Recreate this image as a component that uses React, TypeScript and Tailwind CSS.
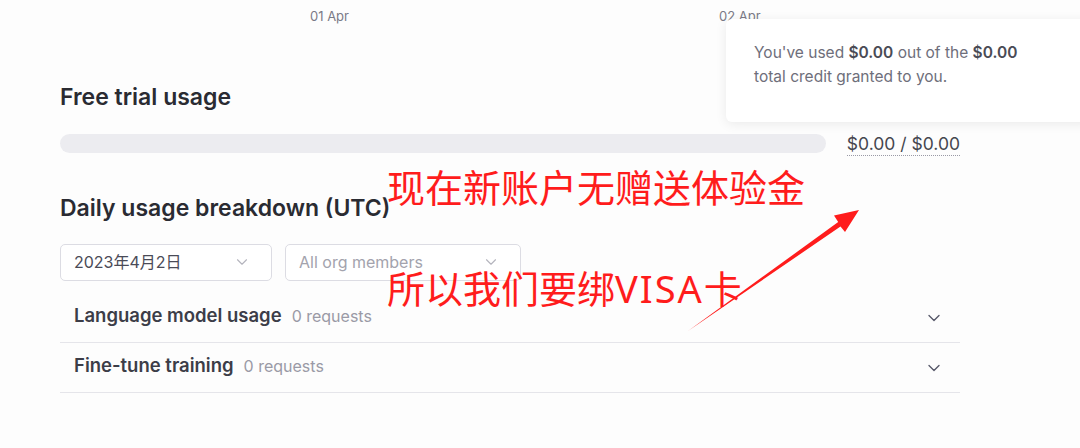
import { ChevronDown } from "lucide-react";

const font = { fontFamily: "Inter, 'Noto Sans', sans-serif" };
const cjk = { fontFamily: "'Noto Sans CJK SC', sans-serif", fontWeight: 400 };

const Select = ({ label, w, muted }: { label: string; w: string; muted?: boolean }) => (
  <div
    className={`${w} h-[37px] flex items-center justify-between pl-[13px] pr-[20px] pb-[2px] border border-[#dcdce3] rounded-[5px] bg-white text-[16px] ${
      muted ? "text-[#a3a3ad]" : "text-[#4a4b57]"
    }`}
    style={{ fontFamily: "Inter, 'Noto Sans CJK SC', sans-serif" }}
  >
    <span>{label}</span>
    <ChevronDown className="h-[18px] w-[18px] text-[#b4b4bd]" strokeWidth={1.5} />
  </div>
);

const Row = ({ title }: { title: string }) => (
  <div className="h-[50px] flex items-center justify-between pl-[14px] pr-[16px] border-b border-[#e5e5ea]">
    <div className="flex items-baseline gap-[10px] pb-[4px]">
      <span className="text-[18.5px] font-semibold text-[#3c3d48]">{title}</span>
      <span className="text-[16px] text-[#9a9aa6]">0 requests</span>
    </div>
    <ChevronDown className="h-[20px] w-[20px] text-[#565869]" strokeWidth={1.6} />
  </div>
);

export default function App() {
  return (
    <div className="relative w-[1080px] h-[448px] overflow-hidden bg-[#fdfdfd]" style={font}>
      <div className="w-[900px] ml-[60px]">
        <div className="h-[34px] flex items-center text-[13px] text-[#7a7a86]">
          <span className="ml-[250px]">01 Apr</span>
          <span className="ml-[370px]">02 Apr</span>
        </div>

        <h2 className="mt-[49px] text-[23px] leading-7 font-semibold text-[#2a2b32]">Free trial usage</h2>

        <div className="mt-[20px] flex items-center justify-between">
          <div className="w-[766px] h-[19px] rounded-full bg-[#ececf0]" />
          <span className="mt-[2px] text-[17.5px] leading-[22px] text-[#45464f] border-b border-dotted border-[#9a9aa6]">
            $0.00 / $0.00
          </span>
        </div>

        <h2 className="mt-[38px] text-[23px] leading-7 font-semibold text-[#2a2b32]">Daily usage breakdown (UTC)</h2>

        <div className="mt-[22px] flex gap-[13px]">
          <Select label="2023年4月2日" w="w-[212px]" />
          <Select label="All org members" w="w-[236px]" muted />
        </div>

        <div className="mt-[12px]">
          <Row title="Language model usage" />
          <Row title="Fine-tune training" />
        </div>
      </div>

      {/* tooltip over the chart */}
      <div className="absolute left-[726px] top-[19px] w-[370px] h-[103px] rounded-md bg-white shadow-[0_2px_12px_rgba(0,0,0,0.08)] pl-[28px] pt-[22px] text-[15.5px] leading-[24px] text-[#6e6e7a]">
        <p>
          You've used <b className="font-semibold text-[#4a4b55]">$0.00</b> out of the{" "}
          <b className="font-semibold text-[#4a4b55]">$0.00</b>
          <br />
          total credit granted to you.
        </p>
      </div>

      {/* red annotations */}
      <div className="absolute left-[387px] top-[162px] text-[38px] leading-[48px] text-[#ff1c1c] whitespace-nowrap" style={cjk}>
        现在新账户无赠送体验金
      </div>
      <div className="absolute left-[387px] top-[263px] text-[38px] leading-[48px] text-[#ff1c1c] whitespace-nowrap" style={cjk}>
        所以我们要绑
        <span className="tracking-[2px]" style={{ fontFamily: "'Noto Sans', sans-serif", fontWeight: 400 }}>
          VISA
        </span>
        卡
      </div>
      <svg className="absolute left-[680px] top-[200px]" width="190" height="140" viewBox="0 0 190 140">
        <polygon points="8,131 160.5,26.5 165,32 179,10 154,15.5 158.2,22" fill="#ff1c1c" />
      </svg>
    </div>
  );
}
